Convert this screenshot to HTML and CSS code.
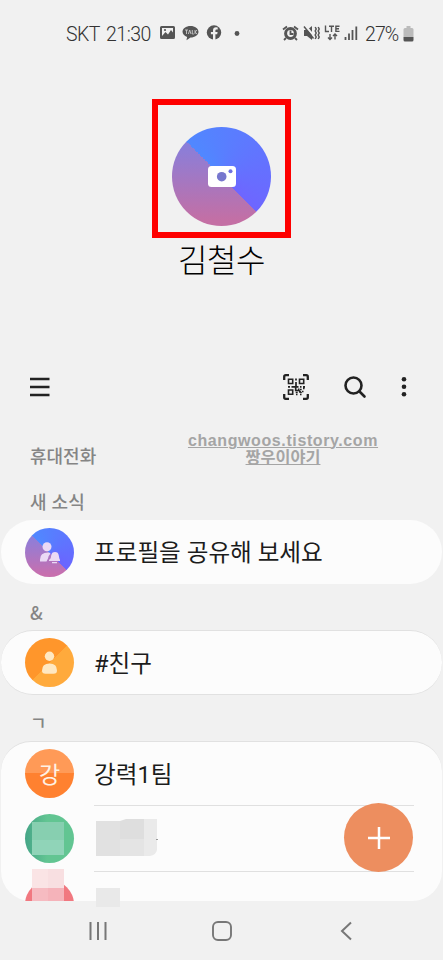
FILE: index.html
```html
<!DOCTYPE html>
<html lang="ko">
<head>
<meta charset="utf-8">
<title>연락처</title>
<link rel="stylesheet" href="styles.css">
</head>
<body>
<div class="phone">
  <header class="status">
    <span class="carrier">SKT</span><span class="clock">21:30</span>
    <svg class="notices" width="82" height="18" viewBox="0 0 82 18">
      <path fill="#555" fill-rule="evenodd" d="M1.500 2h12q1.500 0 1.500 1.500v10q0 1.500-1.500 1.500h-12q-1.500 0-1.500-1.500v-10q0-1.500 1.500-1.500zM2 4v9h11v-9z"/>
      <path fill="#555" d="M2 13v-1l3.500-4 2.500 2.500 3-4.500 2 2.500V13z"/>
      <circle cx="5" cy="6" r="1.100" fill="#555"/>
      <path fill="#555" d="M30.500 2c4.500 0 8 2.600 8 5.800s-3.500 5.800-8 5.800l-4 2.600.6-3.200c-2.800-1-4.600-3-4.600-5.200 0-3.200 3.500-5.800 8-5.800z"/>
      <path fill="none" stroke="#ccc" stroke-width=".9" d="M25 6h3M26.500 6v4M28.400 10l1.300-4 1.300 4M32.300 6v4h1.500M35 6v4M37 6l-1.800 2L37 10"/>
      <circle cx="54" cy="8.500" r="7.200" fill="#555"/>
      <path fill="#f1f1f1" d="M53 16v-5.700h-2.100V8H53V6.500c0-2.200 1.200-3.200 3-3.200l1.700.1v2h-1c-1 0-1.300.5-1.300 1.200V8h2.200l-.4 2.300h-1.800V16z"/>
      <circle cx="77" cy="9.500" r="2.400" fill="#555"/>
    </svg>
    <svg class="signals" width="78" height="20" viewBox="0 0 78 20">
      <circle cx="8.500" cy="9.500" r="4.900" fill="none" stroke="#555" stroke-width="3"/>
      <path fill="none" stroke="#555" stroke-width="1.800" d="M1 5.500l4-3M16 5.500l-4-3M4 14l-2 2M13 14l2 2M8.500 6.500V10h3"/>
      <path fill="#555" d="M22 6h3l5-4v14l-5-4h-3z"/>
      <path fill="none" stroke="#f1f1f1" stroke-width="2" d="M23.500 2l9 10.500"/>
      <path fill="none" stroke="#555" stroke-width="1.500" d="M22 2.500l9.500 12M33.200 3l1 2-1 2 1 2-1 2 1 2-1 2M36.200 3l1 2-1 2 1 2-1 2 1 2-1 2"/>
      <path fill="none" stroke="#555" stroke-width="1.400" d="M43.500 1.500v6h3.500M47 2.200h5M49.500 2v6M57.500 2.200h-3.600v5.200h3.600M54 4.800h3M48 10v5.500M46 13.500l2 2 2-2M53 15.500V10M51 12l2-2 2 2"/>
      <path stroke="#555" stroke-width="1.800" d="M63.500 13v3M67 9.500V16M70.500 6v10M74.300 2.500V16"/>
    </svg>
    <span class="percent">27%</span>
    <svg class="battery" width="11" height="17" viewBox="0 0 11 17"><path fill="#bbb" d="M3.500 0h4v2H9q1.500 0 1.500 1.500V11H.5V3.500Q.5 2 2 2h1.500z"/><path fill="#555" d="M.5 11h10v3q0 1.500-1.500 1.500H2Q.5 15.500.5 14z"/></svg>
  </header>

  <section class="profile">
    <div class="frame"><div class="photo"><svg width="28" height="21" viewBox="0 0 28 21"><rect width="28" height="21" rx="3.500" fill="#fff"/><circle cx="13.700" cy="10.700" r="4.800" fill="#7777ce"/><circle cx="22.500" cy="5.300" r="2" fill="#6e72df"/></svg></div></div>
    <h1 class="name">김철수</h1>
  </section>

  <nav class="tools">
    <svg class="menu" width="20" height="20" viewBox="0 0 20 20"><path stroke="#222" stroke-width="2.300" d="M0 2h19.500M0 10h19.500M0 18h19.500"/></svg>
    <svg class="qr" width="26" height="26" viewBox="0 0 26 26">
      <path fill="none" stroke="#222" stroke-width="2.300" d="M1.200 6V2.700Q1.200 1.200 2.700 1.200H6M20 1.200h3.300q1.500 0 1.500 1.500V6M1.200 20v3.300q0 1.500 1.500 1.500H6M20 24.800h3.300q1.500 0 1.500-1.500V20"/>
      <path fill="none" stroke="#222" stroke-width="1.600" d="M5.500 5.300h4.200v4.200H5.500zM16.500 5.300h4.200v4.200h-4.200zM5.500 16h4.200v4.200H5.500z"/>
      <path stroke="#222" stroke-width="1.700" fill="none" d="M13 4.500v2M13 8v5M5 12.800h2M8.500 12.800h7M17 12.800h1.500M20 12.800h2M12.700 13.500v3h3v-2M12.700 18.500h2M13 20.500h1.500M17 15.500h1.700M20 14.500h1.600M16 18h1.500M19 17.500h1.500M17 20.500h1.500M15.500 16l3 3"/>
    </svg>
    <svg class="search" width="23" height="23" viewBox="0 0 23 23"><g fill="none" stroke="#222" stroke-width="2.600"><circle cx="9.500" cy="9.500" r="8"/><path stroke-linecap="round" d="M15.500 15.500l5 5"/></g></svg>
    <svg class="more" width="6" height="22" viewBox="0 0 6 22"><g fill="#222"><circle cx="3" cy="3.200" r="2.300"/><circle cx="3" cy="10.800" r="2.300"/><circle cx="3" cy="18.300" r="2.300"/></g></svg>
  </nav>

  <div class="source">
    <span class="label phone-label">휴대전화</span>
    <div class="credit"><span class="site">changwoos.tistory.com</span><span class="blog">짱우이야기</span></div>
  </div>

  <h2 class="label news">새 소식</h2>
  <div class="card"><div class="row">
    <div class="avatar share"><svg width="49" height="49" viewBox="0 0 49 49" fill="#ead9f5"><circle cx="22" cy="18.700" r="4.500"/><path d="M15 33.500v-2q0-7 8-7 2 0 2.500 1-2 2-2.500 5l-1.500 3zM24 33v-1l1.700-1.800.5-2.800q.5-3.400 3.800-3.400t3.800 3.400l.5 2.800L35 32v1zM27 34h5v1.200h-5z"/></svg></div>
    <span class="text">프로필을 공유해 보세요</span>
  </div></div>

  <h2 class="label amp">&amp;</h2>
  <div class="card lined"><div class="row">
    <div class="avatar friend"><svg width="49" height="49" viewBox="0 0 49 49" fill="#ffe8c2"><circle cx="24.500" cy="18.200" r="4.700"/><path d="M17 32.500q0-7 7.500-7t7.500 7q0 3.300-3.500 3.300h-8q-3.500 0-3.500-3.300z"/></svg></div>
    <span class="text">#친구</span>
  </div></div>

  <h2 class="label giyeok">ㄱ</h2>
  <div class="card group">
    <div class="row first"><div class="avatar team">강</div><span class="text">강력1팀</span></div>
    <div class="row divided"><div class="avatar green"><i></i></div>
      <svg class="hidden-name" width="66" height="38" viewBox="0 0 66 38"><path fill="#e1e1e1" d="M0 2h24v35H0z"/><path fill="#dedede" d="M24 2l6-2h18v20H24z"/><path fill="#e4e4e4" d="M24 20h24v17H24z"/><path fill="#eaeaea" d="M48 0h13v31q-1 5-7 6h-6z"/><path fill="#999" d="M60 20h2v1h-2z"/></svg>
    </div>
    <div class="row divided last"><div class="avatar red"></div></div>
    <svg class="mosaic" width="100" height="40" viewBox="0 0 100 40"><path fill="#fae4e5" d="M0 0h32v19H0z"/><path fill="#f6bbc1" d="M0 19h32v13H0z"/><path fill="#f8dfe1" d="M16 0h16v19H16z"/><path fill="#f5b3ba" d="M16 19h16v13H16z"/><path fill="#e9e9e9" d="M64 19h24v19H64z"/></svg>
    <button class="add" aria-label="추가"><svg width="22" height="22" viewBox="0 0 22 22"><path stroke="#fff" stroke-width="2.500" d="M0 11h22M11 0v22"/></svg></button>
  </div>

  <footer class="bottom">
    <svg width="18" height="20" viewBox="0 0 18 20"><path stroke="#777" stroke-width="2" d="M1.500 1v18M9 1v18M16.500 1v18"/></svg>
    <svg class="home" width="20" height="20" viewBox="0 0 20 20"><rect x="1" y="1" width="18" height="18" rx="5" fill="none" stroke="#777" stroke-width="1.900"/></svg>
    <svg width="12" height="20" viewBox="0 0 12 20"><path fill="none" stroke="#777" stroke-width="2" d="M11 1.500L2 10l9 8.500"/></svg>
  </footer>
</div>
</body>
</html>
```
FILE: styles.css
```css
* { box-sizing: border-box; }
body { margin: 0; background: #f1f1f1; font-family: "Noto Sans CJK KR", sans-serif; color: #1c1c1c; }
svg { display: block; flex: none; }
h1, h2 { margin: 0; font-weight: 400; }
.phone { width: 443px; height: 960px; overflow: hidden; }

.status { height: 99px; padding: 24px 0 0 66px; display: flex; align-items: flex-start; font: 300 19.5px/21px Roboto, sans-serif; color: #333; }
.carrier { width: 40px; letter-spacing: -.5px; }
.clock { width: 54px; letter-spacing: -.5px; }
.notices { margin-right: 40px; }
.signals { margin-right: 5px; }
.percent { width: 38px; letter-spacing: -.9px; }
.battery { margin-top: 2px; }

.profile { height: 267px; }
.frame { width: 139px; height: 139px; margin-left: 152px; border: 6px solid #fe0000; padding: 22px 0 0 14px; }
.photo { width: 99px; height: 99px; border-radius: 50%; display: flex; align-items: center; justify-content: center; background: conic-gradient(from -45deg, #5088ff 0deg, #6e66ff 180deg, transparent 180.500deg), linear-gradient(#8380e0 10%, #c46fa4 95%); }
.name { width: 443px; text-align: center; font-size: 32px; line-height: 40px; font-weight: 300; letter-spacing: -.5px; color: #000; }

.tools { height: 42px; padding-left: 30px; display: flex; align-items: center; }
.menu { margin-right: 233px; }
.qr { margin-right: 35px; }
.search { margin-right: 34px; }

.label { color: #858585; font-size: 18px; line-height: 24px; font-weight: 500; padding-left: 30px; }
.source { height: 80px; display: flex; align-items: flex-start; }
.phone-label { width: 188px; padding-top: 35px; }
.credit { width: 190px; padding-top: 24px; color: #a5a5a5; display: flex; flex-direction: column; align-items: center; }
.site { font: bold 16px/17px "Liberation Sans", sans-serif; letter-spacing: .6px; white-space: nowrap; text-decoration: underline 1px; }
.blog { font-size: 16.300px; line-height: 14px; font-weight: 700; text-decoration: underline 1px; }
.news { height: 32px; padding-top: 1px; }
.amp { height: 46px; padding-top: 16px; }
.giyeok { height: 46px; padding-top: 15px; }

.card { position: relative; height: 64px; border-radius: 32px; background: #fcfcfc; margin: 0 1px; }
.lined { height: 65px; border-top: 1px solid #e1e1e1; border-bottom: 1px solid #e1e1e1; }
.row { height: 66px; padding-left: 24px; display: flex; align-items: center; gap: 20px; }
.card:not(.group) .row { height: 100%; }
.avatar { width: 49px; height: 49px; border-radius: 50%; flex: none; }
.text { font-family: Roboto, "Noto Sans CJK KR", sans-serif; font-size: 23.600px; line-height: 32px; padding-top: 2px; white-space: nowrap; }
.share { background: conic-gradient(from -45deg, #5088ff 0deg, #6a65ff 180deg, transparent 181deg), linear-gradient(#8580e0 10%, #c86fae 95%); }
.friend { background: linear-gradient(135deg, #ff962b 50%, #ffaa3c 51%); }
.team { background: linear-gradient(#ff9a57 50%, #ff8130 50%); color: #fff2e5; font-size: 23px; line-height: 48px; text-align: center; }
.green { background: linear-gradient(90deg, #45a587, #62c592 45%); padding: 8px 0 0 7px; }
.green i { display: block; width: 32px; height: 33px; background: linear-gradient(#87cfb0 55%, #90d4b8 55%); }
.red { background: #f17880; }
.group { height: 160px; border-radius: 30px; border-top: 1px solid #e1e1e1; }
.group .first { height: 63px; }
.divided { background: linear-gradient(#e0e0e0, #e0e0e0) 93px 0 / 320px 1px no-repeat; }
.last { height: 30px; padding-top: 9px; align-items: flex-start; overflow: hidden; }
.hidden-name { margin-left: 2px; }
.mosaic { position: absolute; left: 31px; top: 127px; }
.add { position: absolute; left: 343px; top: 61px; width: 69px; height: 69px; border: 0; border-radius: 50%; padding: 0; display: flex; align-items: center; justify-content: center; background: #ed8e5f; }
.bottom { padding: 20px 91px 0 89px; display: flex; justify-content: space-between; }
.home { margin-right: 3px; }
```
